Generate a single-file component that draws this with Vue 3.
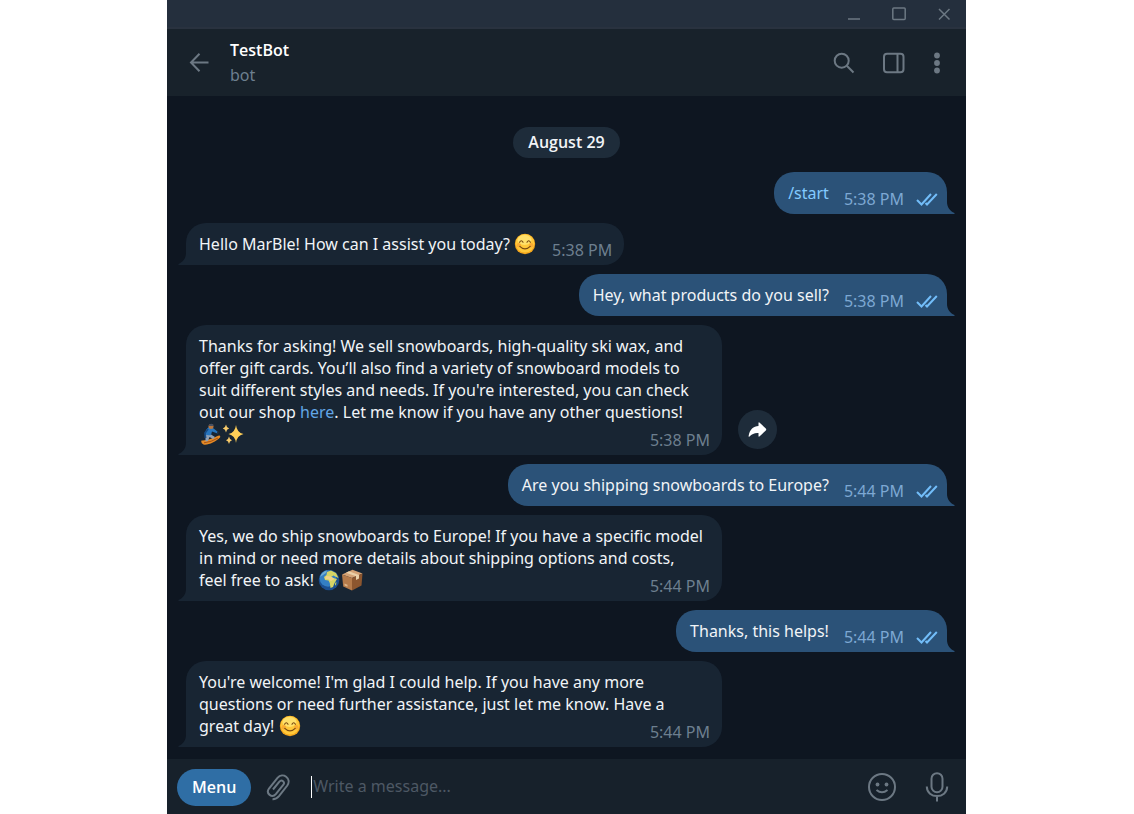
<script setup>
const messages = [
  { id: 1, own: true, time: '5:38 PM', lines: [[{ type: 'command', text: '/start' }]] },
  {
    id: 2, time: '5:38 PM',
    lines: [[{ type: 'text', text: 'Hello MarBle! How can I assist you today? ' }, { type: 'smile' }]]
  },
  { id: 3, own: true, time: '5:38 PM', lines: [[{ type: 'text', text: 'Hey, what products do you sell?' }]] },
  {
    id: 4, wide: true, share: true, time: '5:38 PM',
    lines: [
      [{ type: 'text', text: 'Thanks for asking! We sell snowboards, high-quality ski wax, and' }],
      [{ type: 'text', text: 'offer gift cards. You’ll also find a variety of snowboard models to' }],
      [{ type: 'text', text: 'suit different styles and needs. If you\'re interested, you can check' }],
      [
        { type: 'text', text: 'out our shop ' },
        { type: 'link', text: 'here' },
        { type: 'text', text: '. Let me know if you have any other questions!' }
      ],
      [{ type: 'snowboarder' }, { type: 'sparkles' }]
    ]
  },
  { id: 5, own: true, time: '5:44 PM', lines: [[{ type: 'text', text: 'Are you shipping snowboards to Europe?' }]] },
  {
    id: 6, wide: true, time: '5:44 PM',
    lines: [
      [{ type: 'text', text: 'Yes, we do ship snowboards to Europe! If you have a specific model' }],
      [{ type: 'text', text: 'in mind or need more details about shipping options and costs,' }],
      [{ type: 'text', text: 'feel free to ask! ' }, { type: 'globe' }, { type: 'box' }]
    ]
  },
  { id: 7, own: true, time: '5:44 PM', lines: [[{ type: 'text', text: 'Thanks, this helps!' }]] },
  {
    id: 8, wide: true, time: '5:44 PM',
    lines: [
      [{ type: 'text', text: 'You\'re welcome! I\'m glad I could help. If you have any more' }],
      [{ type: 'text', text: 'questions or need further assistance, just let me know. Have a' }],
      [{ type: 'text', text: 'great day! ' }, { type: 'smile' }]
    ]
  }
]
</script>

<template>
  <div class="page">
    <main class="window">
      <div class="titlebar">
        <button type="button" aria-label="Minimize">
          <svg width="14" height="14" viewBox="0 0 14 14"><path d="M1 12h12" /></svg>
        </button>
        <button type="button" aria-label="Maximize">
          <svg width="14" height="14" viewBox="0 0 14 14"><rect x="0.8" y="1" width="12.4" height="11.6" rx="1" /></svg>
        </button>
        <button type="button" aria-label="Close">
          <svg width="14" height="14" viewBox="0 0 14 14"><path d="M2 2l10.500 10.500M12.500 2L2 12.500" /></svg>
        </button>
      </div>

      <header class="header">
        <button type="button" class="back" aria-label="Back">
          <svg width="20" height="20" viewBox="0 0 20 20"><path d="M19.500 9.500H2M10.500 0.800L2 9.500L10.500 18.200" /></svg>
        </button>
        <div class="peer">
          <h1>TestBot</h1>
          <p>bot</p>
        </div>
        <div class="actions">
          <button type="button" aria-label="Search">
            <svg width="22" height="22" viewBox="0 0 22 22"><circle cx="8.700" cy="8.700" r="7" /><path d="M13.800 13.800L20.500 20.500" /></svg>
          </button>
          <button type="button" aria-label="Toggle side panel">
            <svg width="22" height="22" viewBox="0 0 22 22"><rect x="1" y="1.800" width="19.500" height="18.400" rx="3" /><path d="M14.500 2v18" /></svg>
          </button>
          <button type="button" aria-label="More">
            <svg class="solid" width="8" height="22" viewBox="0 0 8 22"><circle cx="4" cy="3.500" r="2.900" /><circle cx="4" cy="11" r="2.900" /><circle cx="4" cy="18.500" r="2.900" /></svg>
          </button>
        </div>
      </header>

      <section class="chat" aria-label="Messages">
        <div class="date">August 29</div>
        <div v-for="m in messages" :key="m.id" class="row" :class="{ own: m.own }">
          <article class="bubble" :class="{ wide: m.wide }">
            <svg class="tail" width="16" height="22" viewBox="0 0 16 22"><path d="M0 0H8V10C8 15 11 19 15.500 21Q16 22 15 22H0Z" /></svg>
            <div v-for="(line, n) in m.lines" :key="n" class="text"><template v-for="(p, i) in line" :key="i"><span v-if="p.type === 'text'">{{ p.text }}</span><a v-else-if="p.type === 'link' || p.type === 'command'" href="#" :class="p.type">{{ p.text }}</a><svg v-else class="emoji" width="22" height="22" viewBox="0 0 22 22" aria-hidden="true">
              <g v-if="p.type === 'smile'">
                <circle cx="11" cy="11" r="10.200" fill="#f3a51c" />
                <circle cx="11" cy="10.300" r="9.300" fill="#ffc83a" />
                <ellipse cx="10.500" cy="7" rx="7" ry="5" fill="#ffe06a" />
                <circle cx="4.800" cy="12.300" r="2.200" fill="#f79a2e" opacity="0.6" />
                <circle cx="17.200" cy="12.300" r="2.200" fill="#f79a2e" opacity="0.6" />
                <path d="M5.600 9.200Q7.300 6.300 9 9.200M13 9.200Q14.700 6.300 16.400 9.200M5.800 13.300Q11 18.500 16.200 13.300" fill="none" stroke="#7a4a12" stroke-width="1.200" stroke-linecap="round" />
              </g>
              <g v-else-if="p.type === 'snowboarder'">
                <path d="M2.500 17.500C7 18 14 15.500 19 12.800Q22 12 21 14.500C16.500 19 9 22.500 4.500 21.500Q1.500 20 2.500 17.500Z" fill="#e58a25" />
                <path d="M5 19.800Q12 19.200 19 15" stroke="#a65317" fill="none" />
                <path d="M6.500 10L12 11.500L16 14L14 16L10.500 14L9 18L6.500 18.500Z" fill="#8fa0b5" />
                <path d="M10 4Q6.500 6 6 11Q8.500 13 12 12L13 8.500L18.500 10.500L19 9L14 5Z" fill="#2775bd" />
                <path d="M9 6L6 10L6.500 15" stroke="#174b85" stroke-width="1.800" fill="none" />
                <circle cx="12" cy="3.500" r="2.500" fill="#b9773f" />
                <path d="M9.500 3Q11 -0.500 14.500 1.500L13.800 3Z" fill="#465164" />
                <circle cx="19" cy="9.500" r="1" fill="#252f3c" />
              </g>
              <g v-else-if="p.type === 'sparkles'">
                <path d="M14 2Q14.800 9.500 21.500 11Q14.800 12.500 14 20Q13.200 12.500 6.500 11Q13.200 9.500 14 2Z" fill="#ffcf58" />
                <path d="M4 1.500Q4.500 4.800 7.200 5.500Q4.500 6.200 4 9.500Q3.500 6.200 0.800 5.500Q3.500 4.800 4 1.500ZM7 13.500Q7.500 16.500 10 17.200Q7.500 18 7 21Q6.500 18 4 17.200Q6.500 16.500 7 13.500Z" fill="#f7ca6a" />
              </g>
              <g v-else-if="p.type === 'globe'">
                <circle cx="11" cy="11" r="10.300" fill="#1b4f91" />
                <circle cx="10" cy="9.500" r="8.300" fill="#347fc4" />
                <path d="M2 8Q4 2.500 9 1.500L8 4L5 6Z" fill="#72add0" />
                <path d="M9 3L13 1.500L18 4L20.500 9L18 8L15.500 6.500L13 8L17 9.500L19 10L16.500 14L15 18L12.500 19L11.800 14L10.500 11.500L7 11L6 8L8.500 6Z" fill="#d6d465" />
                <path d="M8 7L13 7.500L16.500 10L13 12L10 10L7 10Z" fill="#f0d28a" />
                <path d="M17 14l1.500-1-0.500 3-1 0.500z" fill="#b5c65a" />
              </g>
              <g v-else>
                <path d="M1 5.500L11.500 0.800L21.500 4.500L11 9Z" fill="#d4a275" />
                <path d="M1 5.500L11 9V21.500L2.200 17.500Z" fill="#b57b4b" />
                <path d="M21.500 4.500L11 9V21.500L20.500 16.500Z" fill="#8c562f" />
                <path d="M5 3.700L15 7.300V11L18 9.600V6L8 2.300Z" fill="#ead0a8" />
                <path d="M3.500 14.500l3 1.200v2l-3-1.300z" fill="#ddb68a" />
              </g>
            </svg></template><span v-if="n === m.lines.length - 1" class="meta"><time>{{ m.time }}</time><svg v-if="m.own" class="checks" width="22" height="14" viewBox="0 0 22 14" aria-label="Read"><path d="M1 8L5.500 12.500L15 2M9.500 11L11 12.500L20.800 2" /></svg></span></div>
          </article>
          <button v-if="m.share" type="button" class="share" aria-label="Forward">
            <svg width="20" height="18" viewBox="0 0 20 18"><path d="M10.500 2.200Q10.500 0.800 11.700 1.700L17.800 7.600Q18.700 8.500 17.800 9.400L11.700 15.300Q10.500 16.300 10.500 14.800V12Q5 11.500 1.500 15.500Q0.400 16.300 0.700 14.500C1.700 8.500 5.500 5.200 10.500 5Z" /></svg>
          </button>
        </div>
      </section>

      <footer class="composer">
        <button type="button" class="menu">Menu</button>
        <button type="button" class="attach" aria-label="Attach file">
          <svg width="24" height="28" viewBox="0 0 24 28"><path d="M7 16.500L13.200 8.800C15.800 5.800 19.500 9 17.200 12L9.800 21.200C6 25.500-.6 20.600 3 15.500L11.500 4.900C16.800-1.200 26 5.500 21.300 12.500L13 23.200C11.300 25.200 9 26.300 6.500 26.200" /></svg>
        </button>
        <span class="caret"></span>
        <input type="text" placeholder="Write a message..." aria-label="Write a message" />
        <button type="button" class="emoji-button" aria-label="Emoji">
          <svg width="28" height="28" viewBox="0 0 28 28"><circle cx="14" cy="14" r="13" /><path d="M8.500 17Q14 21.500 19.500 17" /><circle class="solid" cx="9.500" cy="11.500" r="1.900" /><circle class="solid" cx="18.500" cy="11.500" r="1.900" /></svg>
        </button>
        <button type="button" aria-label="Record voice message">
          <svg width="24" height="30" viewBox="0 0 24 30"><rect x="6.500" y="1.200" width="11" height="19" rx="5.500" /><path d="M1.800 14.500C1.800 27.300 22.200 27.300 22.200 14.500M12 24.200V29.500" /></svg>
        </button>
      </footer>
    </main>
  </div>
</template>

<style>
body {
  margin: 0;
  background: #ffffff;
}
</style>

<style scoped>
.page {
  display: flex;
  min-height: 100vh;
  padding: 0 168px 0 167px;
  font-family: "Noto Sans", "Open Sans", sans-serif;
  font-size: 16px;
  line-height: 22px;
  color: #f1f4f7;
}
.page, .page * {
  box-sizing: border-box;
}
.window {
  display: flex;
  flex: 1;
  flex-direction: column;
  min-width: 0;
  background: #0e1621;
}
button {
  display: grid;
  place-items: center;
  flex: none;
  padding: 0;
  border: 0;
  background: none;
  color: #6c7883;
  font: inherit;
}
button svg {
  display: block;
  fill: none;
  stroke: currentColor;
  stroke-width: 2;
}
.titlebar {
  display: flex;
  justify-content: flex-end;
  gap: 31px;
  height: 29px;
  padding: 0 15px;
  background: #242f3d;
  border-bottom: 2px solid #29323f;
}
.titlebar svg {
  stroke-width: 1.5;
}
.header {
  display: flex;
  align-items: center;
  height: 67px;
  padding: 0 25px 0 22px;
  background: #18222b;
}
.peer {
  flex: 1;
  margin-left: 21px;
}
h1, p {
  margin: 0;
  font-size: 16px;
  line-height: 25px;
}
h1, .date, button.menu {
  font-family: "Open Sans", "Noto Sans", sans-serif;
  font-weight: 600;
}
h1 {
  color: #ffffff;
}
p {
  color: #6d7f8f;
}
.actions {
  display: flex;
  align-items: center;
  gap: 28px;
}
.solid {
  fill: currentColor;
  stroke: none;
}
.chat {
  display: flex;
  flex: 1;
  flex-direction: column;
  gap: 9px;
  padding: 31px 19px 12px;
}
.date {
  align-self: center;
  margin-bottom: 5px;
  padding: 4px 15px 5px;
  border-radius: 16px;
  background: #1e2c3a;
}
.row {
  display: flex;
  align-items: flex-end;
  gap: 16px;
}
.own {
  justify-content: flex-end;
}
.bubble {
  position: relative;
  max-width: 100%;
  padding: 10px 12px 10px 13px;
  border-radius: 20px 20px 20px 0;
  background: #182533;
}
.wide {
  width: 536px;
}
.own .bubble {
  padding: 10px 9px 10px 14px;
  border-radius: 20px 20px 0 20px;
  background: #2b5278;
}
.tail {
  position: absolute;
  bottom: 0;
  left: -8px;
  fill: #182533;
  transform: scaleX(-1);
}
.own .tail {
  right: -8px;
  left: auto;
  fill: #2b5278;
  transform: none;
}
.text {
  position: relative;
  white-space: pre-wrap;
}
.text a {
  color: #62a5e6;
  text-decoration: none;
}
.text .command {
  color: #83caff;
}
.emoji {
  width: 22px;
  height: 22px;
  margin-right: 1px;
  vertical-align: top;
}
.meta {
  position: relative;
  top: 6px;
  float: right;
  display: flex;
  align-items: center;
  gap: 12px;
  margin-left: 15px;
  color: #6d7f8f;
}
.own .meta {
  color: #7da8d3;
}
.checks {
  fill: none;
  stroke: #72bdf9;
  stroke-width: 2;
}
.share {
  width: 39px;
  height: 39px;
  margin-bottom: 6px;
  border-radius: 50%;
  background: #1e2c3a;
  color: #ffffff;
}
.share svg {
  fill: currentColor;
  stroke: none;
}
.composer {
  display: flex;
  align-items: center;
  height: 55px;
  padding: 1px 17px 0 10px;
  background: #17212b;
}
.menu {
  height: 37px;
  padding: 0 15px;
  border-radius: 19px;
  background: #2f6ea5;
  color: #ffffff;
}
.attach {
  margin: 0 21px 0 15px;
}
.caret {
  width: 1px;
  height: 22px;
  background: #ffffff;
}
input {
  flex: 1;
  min-width: 0;
  padding: 0 0 2px 1px;
  border: 0;
  outline: 0;
  background: none;
  color: #ffffff;
  font: inherit;
}
input::placeholder {
  color: #4d5864;
  opacity: 1;
}
.emoji-button {
  margin-right: 29px;
}
</style>
